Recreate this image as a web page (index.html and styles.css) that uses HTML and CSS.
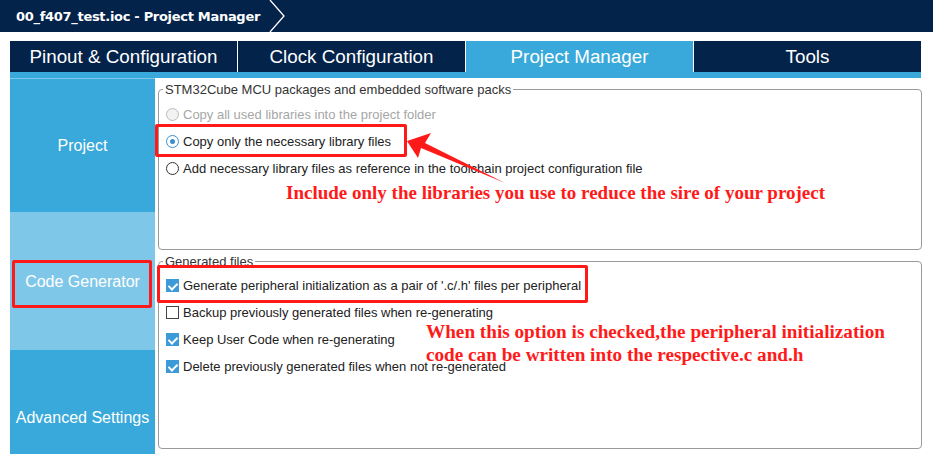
FILE: index.html
```html
<!DOCTYPE html>
<html>
<head>
<meta charset="utf-8">
<link rel="stylesheet" href="styles.css">
</head>
<body>
<div class="page">
  <header class="topbar">
    <span class="title">00_f407_test.ioc - Project Manager</span>
    <svg class="chev" width="20" height="32" viewBox="0 0 20 32"><polyline points="1,0 15,16 1,32" fill="none" stroke="#ffffff" stroke-width="1.3"/></svg>
  </header>

  <nav class="tabs">
    <div class="tab">Pinout &amp; Configuration</div>
    <div class="tab">Clock Configuration</div>
    <div class="tab active">Project Manager</div>
    <div class="tab">Tools</div>
  </nav>
  <div class="strip"></div>

  <div class="body">
    <aside class="side">
      <div class="sec sec-project">Project</div>
      <div class="sec sec-code">Code Generator</div>
      <div class="sec sec-adv">Advanced Settings</div>
    </aside>

    <main class="main">
      <fieldset class="group g1">
        <legend>STM32Cube MCU packages and embedded software packs</legend>
        <div class="row disabled"><span class="radio"></span>Copy all used libraries into the project folder</div>
        <div class="row"><span class="radio on"></span>Copy only the necessary library files</div>
        <div class="row"><span class="radio"></span>Add necessary library files as reference in the toolchain project configuration file</div>
        <div class="note note1">Include only the libraries you use to reduce the sire of your project</div>
      </fieldset>

      <fieldset class="group g2">
        <legend>Generated files</legend>
        <div class="row"><span class="check on"></span>Generate peripheral initialization as a pair of '.c/.h' files per peripheral</div>
        <div class="row"><span class="check"></span>Backup previously generated files when re-generating</div>
        <div class="row"><span class="check on"></span>Keep User Code when re-generating</div>
        <div class="row"><span class="check on"></span>Delete previously generated files when not re-generated</div>
        <div class="note note2">When this option is checked,the peripheral initialization<br>code can be written into the respective.c and.h</div>
      </fieldset>
    </main>
  </div>

  <div class="box box-side"></div>
  <div class="box box-radio"></div>
  <div class="box box-check"></div>
  <svg class="arrow" width="933" height="454" viewBox="0 0 933 454">
    <polygon points="407,141 431,133 425,143 505,183 421,148 418,158" fill="#ff1a1a"/>
  </svg>
</div>
</body>
</html>
```

FILE: styles.css
```css
* { box-sizing: border-box; }
html, body { margin: 0; padding: 0; background: #ffffff; }
body { font-family: "Liberation Sans", Arial, sans-serif; }

.page { position: relative; width: 933px; height: 454px; overflow: hidden; }

.topbar {
  height: 32px;
  background: #03234b;
  display: flex;
  align-items: center;
  padding-left: 16px;
}
.title {
  color: #ffffff;
  font-family: "DejaVu Sans", sans-serif;
  font-weight: bold;
  font-size: 13px;
  letter-spacing: -0.3px;
}
.chev { margin-left: 9px; display: block; }

.tabs {
  margin: 9px 12px 0 10px;
  height: 31px;
  display: flex;
  background: #03234b;
}
.tab {
  flex: 1;
  color: #ffffff;
  font-size: 18.8px;
  display: flex;
  align-items: center;
  justify-content: center;
  border-right: 1px solid #ffffff;
}
.tab:last-child { border-right: none; }
.tab.active { background: #39a9db; }

.strip { margin: 0 12px 0 10px; height: 6px; background: #39a9db; }

.body { display: flex; margin-left: 10px; height: 376px; }

.side { width: 145px; display: flex; flex-direction: column; }
.sec {
  color: #ffffff;
  font-size: 16px;
  display: flex;
  align-items: center;
  justify-content: center;
}
.sec-project { height: 135px; background: #39a9db; border-top: 1px solid #7fc7e9; border-bottom: 1px solid #7fc7e9; }
.sec-code { height: 137px; background: #7fc7e9; }
.sec-adv { flex: 1; background: #39a9db; padding-top: 32px; }

.main { flex: 1; padding: 4px 11px 0 3px; }

.group {
  margin: 0;
  border: 1px solid #9a9a9a;
  border-radius: 4px;
  padding: 0 0 0 7px;
  position: relative;
}
.group legend {
  font-family: "Liberation Sans", Arial, sans-serif;
  font-size: 13px;
  color: #333333;
  padding: 0 2px 0 2px;
  margin-left: -3px;
}
.g1 { height: 168px; padding-top: 4px; }
.g2 { height: 195px; margin-top: 4px; padding-top: 3px; }

.row {
  height: 27px;
  display: flex;
  align-items: center;
  font-size: 13px;
  color: #222222;
}
.row.disabled { color: #a6a6a6; }

.radio {
  width: 13px; height: 13px;
  border-radius: 50%;
  border: 1px solid #333333;
  background: #ffffff;
  margin-right: 4px;
  position: relative;
  flex: none;
}
.disabled .radio { border-color: #bcbcbc; background: #f2f2f2; }
.radio.on { border-color: #3a8fd0; }
.radio.on::after {
  content: "";
  position: absolute;
  left: 3px; top: 3px;
  width: 5px; height: 5px;
  border-radius: 50%;
  background: #3a8fd0;
}

.check {
  width: 13px; height: 13px;
  border: 1px solid #444444;
  background: #ffffff;
  margin-right: 4px;
  position: relative;
  flex: none;
}
.check.on { background: #3c9ad8; border-color: #3c9ad8; }
.check.on::after {
  content: "";
  position: absolute;
  left: 3px; top: 1px;
  width: 4px; height: 7px;
  border: solid #ffffff;
  border-width: 0 2px 2px 0;
  transform: rotate(45deg);
}

.note {
  font-family: "Liberation Serif", "Times New Roman", serif;
  font-weight: bold;
  color: #ff1a1a;
  font-size: 19px;
}
.note1 { margin: 0 0 0 120px; }
.note2 { position: absolute; left: 267px; top: 51px; line-height: 23px; font-size: 19.2px; }

.box { position: absolute; border: 3px solid #ff1a1a; border-radius: 2px; }
.box-side { left: 12px; top: 260px; width: 140px; height: 48px; }
.box-radio { left: 155px; top: 124px; width: 252px; height: 33px; }
.box-check { left: 157px; top: 265px; width: 431px; height: 38px; }

.arrow { position: absolute; left: 0; top: 0; pointer-events: none; }
```
